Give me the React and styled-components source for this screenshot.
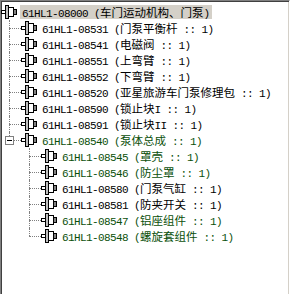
import React from "react";
import styled, { createGlobalStyle, css } from "styled-components";

const GlobalStyle = createGlobalStyle`
  html, body {
    margin: 0;
    padding: 0;
    background: #fff;
  }
  body {
    font-family: "Liberation Mono", "Noto Sans CJK SC", monospace;
  }
`;

const Panel = styled.div`
  width: 290px;
  height: 300px;
  box-sizing: border-box;
  padding-top: 3px;
  border: 1px solid;
  border-color: #808080 #ffffff #ffffff #808080;
  box-shadow: inset 1px 1px 0 #404040, inset -1px -1px 0 #d4d0c8;
  background: #fff;
  overflow: hidden;
`;

const Node = styled.div`
  position: relative;

  ${({ $level, $last }) =>
    $level > 0 &&
    css`
      &::before {
        content: "";
        position: absolute;
        left: ${($level - 1) * 20 + 8}px;
        top: 8px;
        width: 12px;
        border-top: 1px dotted #808080;
      }
      &::after {
        content: "";
        position: absolute;
        left: ${($level - 1) * 20 + 8}px;
        top: 0;
        ${$last ? "height: 8px;" : "bottom: 0;"}
        border-left: 1px dotted #808080;
      }
      &:first-child::after {
        top: -2px;
        ${$last ? "height: 10px;" : ""}
      }
    `}
`;

const Row = styled.div`
  position: relative;
  display: flex;
  align-items: center;
  height: 16px;
  padding-left: ${({ $level }) => $level * 20}px;
`;

const Icon = styled.svg`
  flex: none;
  width: 16px;
  height: 14px;
  margin-right: 3px;
`;

const Label = styled.span`
  display: inline-block;
  height: 14px;
  line-height: 14px;
  padding: 0 2px;
  white-space: nowrap;
  font-size: 11px;
  letter-spacing: -0.6px;
  color: ${({ $green }) => ($green ? "#0a500a" : "#000")};
  background: ${({ $selected }) => ($selected ? "#d4d0c8" : "transparent")};
`;

const Han = styled.span`
  font-family: "Noto Sans CJK SC", sans-serif;
  font-size: 11.5px;
  letter-spacing: 0;
`;

const Toggle = styled.span`
  position: absolute;
  z-index: 1;
  top: 4px;
  width: 9px;
  height: 9px;
  box-sizing: border-box;
  border: 1px solid #808080;
  background: #fff;

  &::before {
    content: "";
    position: absolute;
    left: 1px;
    top: 3px;
    width: 5px;
    height: 1px;
    background: #000;
  }
`;

const PartIcon = () => (
  <Icon viewBox="0 0 16 14" shapeRendering="crispEdges">
    <rect x="0.5" y="5.5" width="4" height="3" fill="#fff" stroke="#000" />
    <rect x="4.5" y="0.5" width="3" height="13" fill="#c0c0c0" stroke="#000" />
    <rect x="7.5" y="2.5" width="5" height="9" fill="#fff" stroke="#000" />
    <rect x="12.5" y="4.5" width="3" height="5" fill="#808080" stroke="#000" />
  </Icon>
);

const splitText = (text) =>
  text
    .split(/([\u3000-\u303f\u4e00-\u9fff]+)/)
    .map((part, i) => (i % 2 ? <Han key={i}>{part}</Han> : part));

const tree = {
  text: "61HL1-08000 (车门运动机构、门泵)",
  selected: true,
  children: [
    { text: "61HL1-08531 (门泵平衡杆 :: 1)" },
    { text: "61HL1-08541 (电磁阀 :: 1)" },
    { text: "61HL1-08551 (上弯臂 :: 1)" },
    { text: "61HL1-08552 (下弯臂 :: 1)" },
    { text: "61HL1-08520 (亚星旅游车门泵修理包 :: 1)" },
    { text: "61HL1-08590 (锁止块I :: 1)" },
    { text: "61HL1-08591 (锁止块II :: 1)" },
    {
      text: "61HL1-08540 (泵体总成 :: 1)",
      green: true,
      open: true,
      children: [
        { text: "61HL1-08545 (罩壳 :: 1)", green: true },
        { text: "61HL1-08546 (防尘罩 :: 1)", green: true },
        { text: "61HL1-08580 (门泵气缸 :: 1)" },
        { text: "61HL1-08581 (防夹开关 :: 1)" },
        { text: "61HL1-08547 (铝座组件 :: 1)", green: true },
        { text: "61HL1-08548 (螺旋套组件 :: 1)", green: true },
      ],
    },
  ],
};

const TreeNode = ({ node, level, last }) => (
  <Node $level={level} $last={last}>
    <Row $level={level}>
      {node.open && level > 0 && <Toggle style={{ left: (level - 1) * 20 + 4 }} />}
      <PartIcon />
      <Label $green={node.green} $selected={node.selected}>
        {splitText(node.text)}
      </Label>
    </Row>
    {node.children &&
      node.children.map((child, i) => (
        <TreeNode
          key={child.text}
          node={child}
          level={level + 1}
          last={i === node.children.length - 1}
        />
      ))}
  </Node>
);

const App = () => (
  <>
    <GlobalStyle />
    <Panel>
      <TreeNode node={tree} level={0} last />
    </Panel>
  </>
);

export default App;
